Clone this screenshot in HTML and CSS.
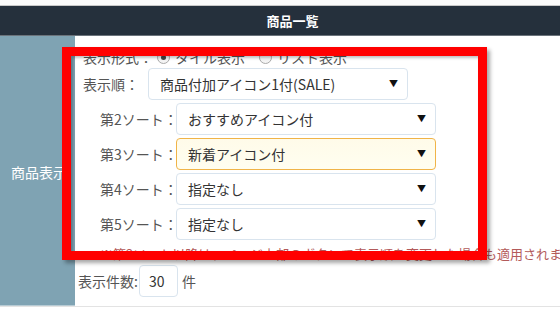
FILE: index.html
```html
<!DOCTYPE html>
<html lang="ja">
<head>
    <meta charset="UTF-8">
    <title>商品一覧</title>
    <link rel="stylesheet" href="styles.css">
</head>
<body>
    <div class="topstrip"></div>
    <div class="page-head">商品一覧</div>

    <div class="setting-row">
        <div class="setting-name">商品表示</div>
        <div class="setting-body">
            <div class="form-line view-type">
                <span class="label">表示形式：</span>
                <span class="radio checked"></span><span class="radio-text">タイル表示</span>
                <span class="radio"></span><span class="radio-text">リスト表示</span>
            </div>

            <div class="form-line order">
                <span class="label">表示順：</span>
                <div class="fake-select w-order">商品付加アイコン1付(SALE)<span class="arrow">▼</span></div>
            </div>

            <div class="sorts">
                <div class="form-line">
                    <span class="label sort-label">第2ソート：</span>
                    <div class="fake-select">おすすめアイコン付<span class="arrow">▼</span></div>
                </div>
                <div class="form-line">
                    <span class="label sort-label">第3ソート：</span>
                    <div class="fake-select focused">新着アイコン付<span class="arrow">▼</span></div>
                </div>
                <div class="form-line">
                    <span class="label sort-label">第4ソート：</span>
                    <div class="fake-select">指定なし<span class="arrow">▼</span></div>
                </div>
                <div class="form-line">
                    <span class="label sort-label">第5ソート：</span>
                    <div class="fake-select">指定なし<span class="arrow">▼</span></div>
                </div>
                <p class="note">※第2ソート以降は、ページ上部のボタンで表示順を変更した場合も適用されます</p>
            </div>

            <div class="form-line count">
                <span class="label">表示件数:</span>
                <div class="num-input">30</div>
                <span class="unit">件</span>
            </div>
        </div>

        <!-- 赤枠の強調 -->
        <div class="highlight"></div>
    </div>
</body>
</html>
```

FILE: styles.css
```css
body {
    margin: 0;
    font-family: "Noto Sans CJK JP", "Noto Sans", sans-serif;
    font-size: 14px;
    color: #555;
    background: #fff;
    overflow: hidden;
}

.topstrip {
    height: 5px;
    background: #fafafa;
    border-bottom: 1px solid #c8c8c8;
}

.page-head {
    height: 29px;
    line-height: 29px;
    background: #25303c;
    border-bottom: 1px solid #6b737b;
    color: #fff;
    font-size: 13px;
    font-weight: bold;
    text-align: center;
    padding-left: 25px;
}

.setting-row {
    position: relative;
    display: flex;
    border-bottom: 1px solid #e3e3e3;
}

.setting-name {
    width: 75px;
    flex-shrink: 0;
    background: #7fa3b3;
    color: #fff;
    font-size: 14px;
    white-space: nowrap;
    padding: 126px 0 0 11px;
    box-sizing: border-box;
    border-bottom: 1px solid #b7cbd4;
}

.setting-body {
    flex: 1;
    padding: 11px 0 9px 3px;
    white-space: nowrap;
}

.form-line {
    display: flex;
    align-items: center;
    line-height: 20px;
}

.label {
    color: #555;
}

.view-type {
    height: 20px;
    padding-left: 5px;
}

.view-type .label {
    width: 74px;
}

.radio {
    width: 11px;
    height: 11px;
    border: 1px solid #aaa;
    border-radius: 50%;
    background: #f4f4f4;
    margin-right: 5px;
    display: flex;
    align-items: center;
    justify-content: center;
}

.radio.checked::after {
    content: "";
    width: 5px;
    height: 5px;
    border-radius: 50%;
    background: #444;
}

.radio-text {
    margin-right: 14px;
}

.order {
    margin-top: 1px;
    padding-left: 5px;
}

.order .label {
    width: 65px;
}

.fake-select {
    position: relative;
    width: 260px;
    height: 32px;
    box-sizing: border-box;
    border: 1px solid #d9e4ee;
    border-radius: 4px;
    background: #fff;
    color: #333;
    font-size: 14px;
    line-height: 30px;
    padding-left: 11px;
}

.fake-select.focused {
    border-color: #f0b448;
    background: linear-gradient(#fffbe9, #fffef0);
}

.arrow {
    position: absolute;
    right: 9px;
    top: 0;
    font-size: 9px;
    color: #111;
}

.sorts {
    padding-left: 22px;
    margin-top: 3px;
}

.sorts .form-line {
    margin-bottom: 3px;
}

.sort-label {
    width: 76px;
}

.note {
    margin: 4px 0 0 0;
    font-size: 13px;
    line-height: 20px;
    color: #b35a5a;
}

.count {
    margin-top: 1px;
}

.count .label {
    width: 61px;
}

.num-input {
    width: 39px;
    height: 32px;
    box-sizing: border-box;
    border: 1px solid #d9e4ee;
    border-radius: 4px;
    color: #333;
    line-height: 30px;
    padding-left: 9px;
    margin-right: 4px;
}

.unit {
    color: #555;
}

.highlight {
    position: absolute;
    left: 62px;
    top: 11px;
    width: 425px;
    height: 213px;
    box-sizing: border-box;
    border: 9px solid #ff0000;
    box-shadow: 3px 3px 4px rgba(0, 0, 0, 0.35), inset 2px 2px 3px rgba(0, 0, 0, 0.25);
}
```
